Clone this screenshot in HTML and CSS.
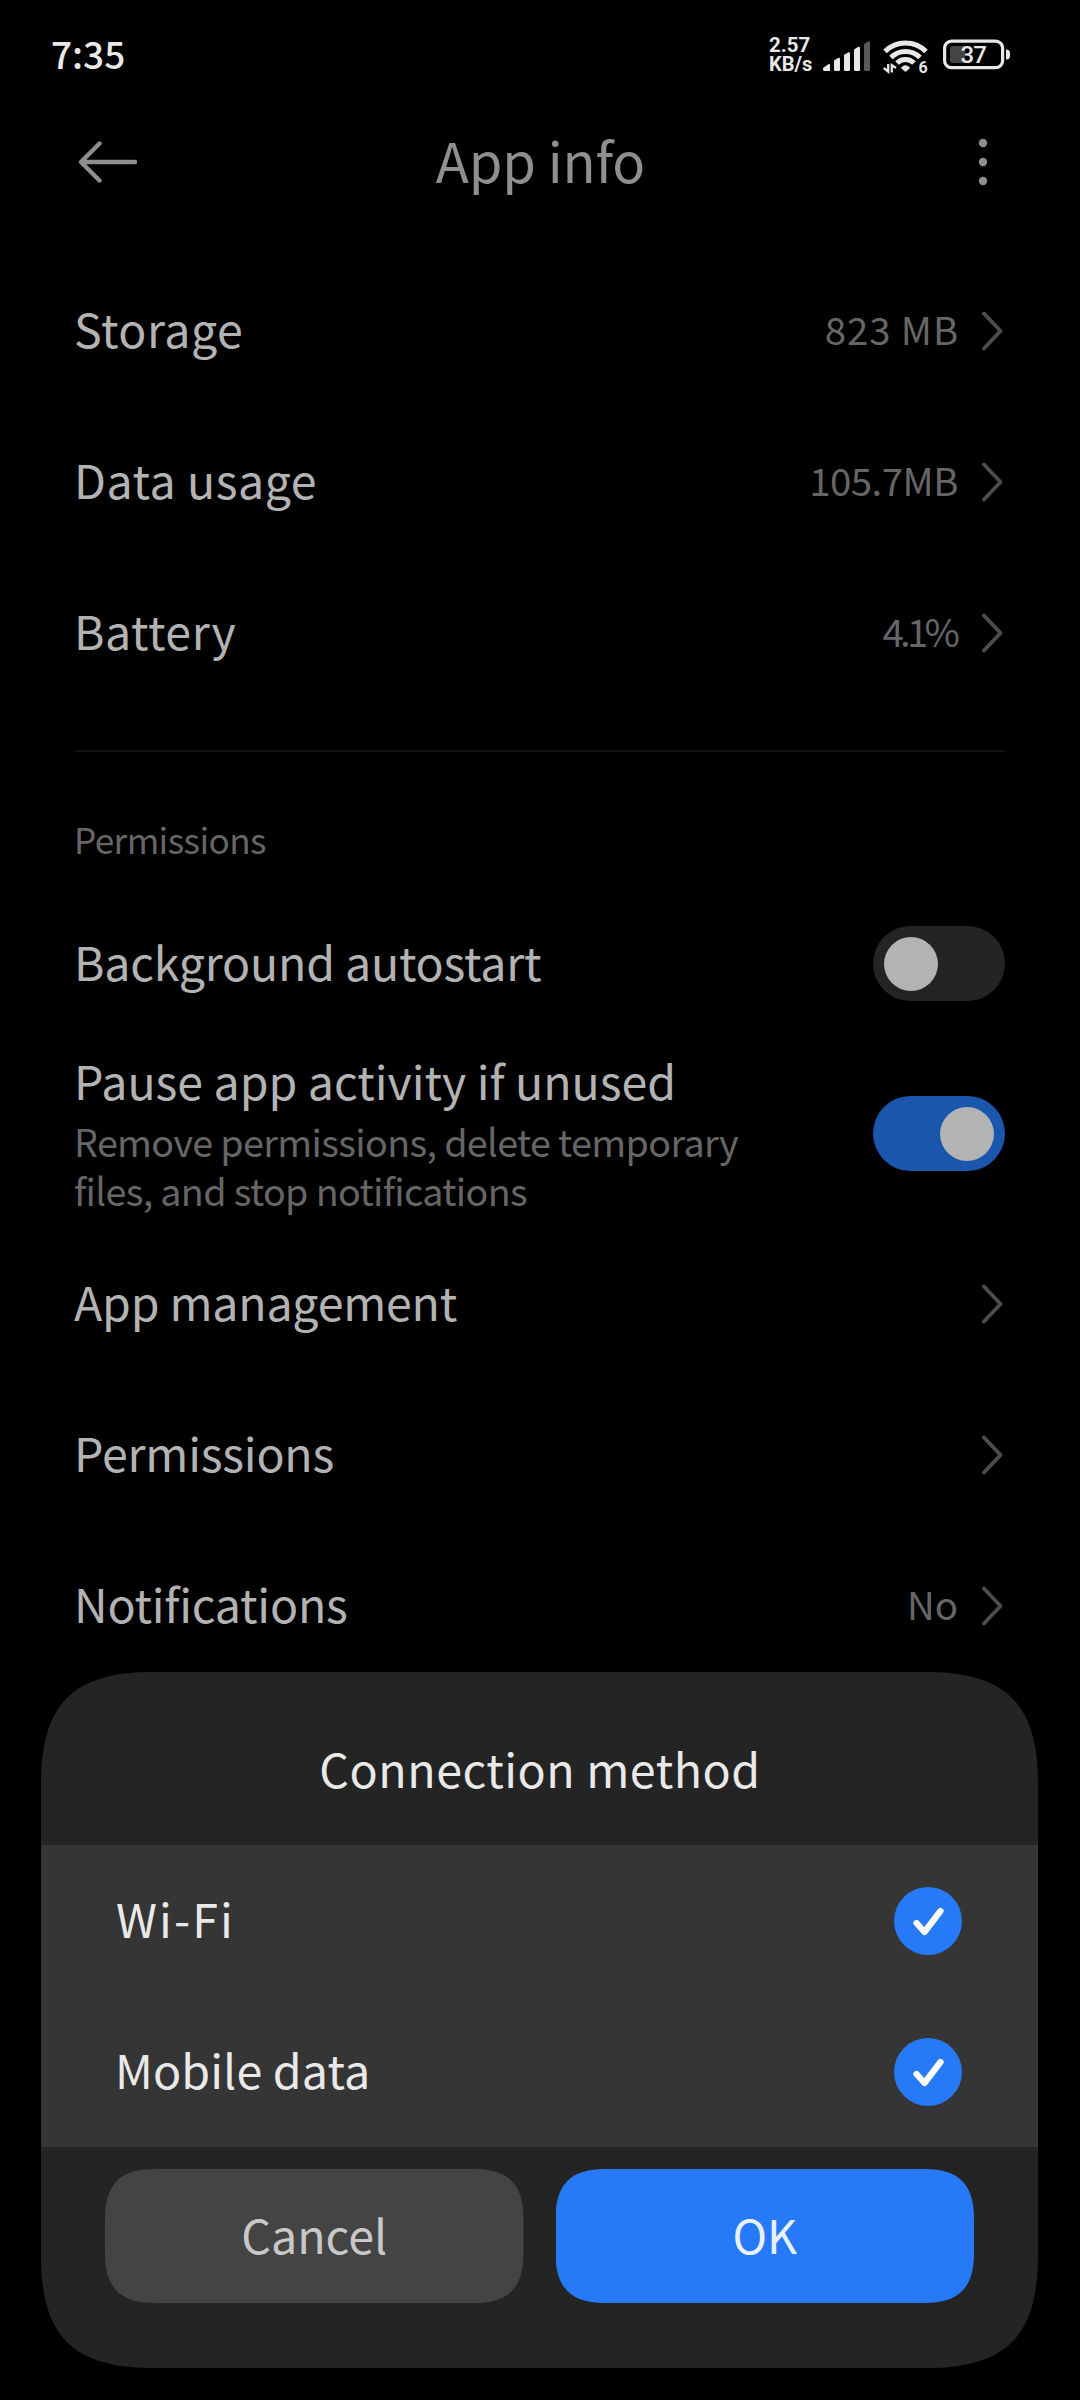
FILE: index.html
```
<!DOCTYPE html>
<html lang="en">
<head>
<meta charset="utf-8">
<title>App info</title>
<link rel="stylesheet" href="styles.css">
</head>
<body>
<div class="screen">
  <div class="status">
    <div class="clock">7:35</div>
    <div class="speed"><span class="rate">2.57</span><span>KB/s</span></div>
    <svg class="signal" width="47" height="32" viewBox="0 0 47 32">
      <g fill="#e8e8e8">
        <path d="M0 28L5 24.5Q7 23 7 25V31H1.5Q0 31 0 29.5Z"/>
        <path d="M11 20.500L15 18Q17 17 17 19V29.500Q17 31 15.500 31H12.500Q11 31 11 29.500Z"/>
        <path d="M21 15L25 12.500Q27 11.500 27 13.500V29.500Q27 31 25.500 31H22.500Q21 31 21 29.500Z"/>
        <path d="M31 9.500L35 7Q37 6 37 8V29.500Q37 31 35.500 31H32.500Q31 31 31 29.500Z"/>
      </g>
      <path fill="#595959" d="M41 4L45 1.500Q47 .5 47 2.500V29.500Q47 31 45.500 31H42.500Q41 31 41 29.500Z"/>
    </svg>
    <svg class="wifi" width="46" height="40" viewBox="0 0 46 40">
      <g fill="none" stroke="#e8e8e8" stroke-width="5">
        <path d="M2 14.500A29 29 0 0 1 43 14.500"/>
        <path d="M8 20.500A20.500 20.500 0 0 1 37 20.500"/>
        <path d="M14 26A12 12 0 0 1 31 26"/>
      </g>
      <path fill="#e8e8e8" d="M18.500 30Q22.500 26.500 26.500 30Q27 31 26.500 31.500L23.500 34.300Q22.500 35 21.500 34.300L18.500 31.500Q18 31 18.500 30Z"/>
      <path fill="none" stroke="#e8e8e8" stroke-width="2.300" d="M5.200 27V34.500L.8 31M8.800 35.500V28.200L13 31"/>
      <text class="generation" x="35.500" y="36">6</text>
    </svg>
    <svg class="battery" width="68" height="32" viewBox="0 0 68 32">
      <rect x="1.600" y="2.100" width="58" height="26.600" rx="7" fill="none" stroke="#e8e8e8" stroke-width="3.200"/>
      <path fill="#444" d="M10 7H22V24H10Q7 24 7 21V10Q7 7 10 7Z"/>
      <path fill="#e8e8e8" d="M63 10.500Q67 10.500 67 14V17Q67 20.500 63 20.500Z"/>
      <text class="charge" x="17.500" y="24">37</text>
    </svg>
  </div>

  <div class="header">
    <svg width="60" height="46" viewBox="0 0 60 46" fill="none" stroke="#8f8f8f" stroke-width="4.400" stroke-linecap="round" stroke-linejoin="round"><path d="M22.500 4.500L4 23L22.500 41.500M5 23H58"/></svg>
    <h1 class="title">App info</h1>
    <svg width="10" height="48" viewBox="0 0 10 48" fill="#8f8f8f"><circle cx="5" cy="5" r="4.200"/><circle cx="5" cy="24" r="4.200"/><circle cx="5" cy="43" r="4.200"/></svg>
  </div>

  <div class="group">
    <div class="row"><span class="label loose">Storage</span><span class="value v-storage">823 MB</span><svg class="chevron" viewBox="0 0 22 40"><path d="M3 2.500L19.500 20L3 37.500"/></svg></div>
    <div class="row"><span class="label loose">Data usage</span><span class="value v-data">105.7MB</span><svg class="chevron" viewBox="0 0 22 40"><path d="M3 2.500L19.500 20L3 37.500"/></svg></div>
    <div class="row"><span class="label loose">Battery</span><span class="value v-battery">4.1%</span><svg class="chevron" viewBox="0 0 22 40"><path d="M3 2.500L19.500 20L3 37.500"/></svg></div>
  </div>

  <div class="divider"></div>

  <div class="section">Permissions</div>
  <div class="group">
    <div class="row"><span class="label tight">Background autostart</span><span class="toggle"><span class="knob"></span></span></div>
    <div class="row tall">
      <div class="text">
        <div class="heading">Pause app activity if unused</div>
        <div class="summary">Remove permissions, delete temporary files, and stop notifications</div>
      </div>
      <span class="toggle on"><span class="knob"></span></span>
    </div>
    <div class="row"><span class="label tight">App management</span><svg class="chevron" viewBox="0 0 22 40"><path d="M3 2.500L19.500 20L3 37.500"/></svg></div>
    <div class="row"><span class="label tight">Permissions</span><svg class="chevron" viewBox="0 0 22 40"><path d="M3 2.500L19.500 20L3 37.500"/></svg></div>
    <div class="row"><span class="label tight">Notifications</span><span class="value">No</span><svg class="chevron" viewBox="0 0 22 40"><path d="M3 2.500L19.500 20L3 37.500"/></svg></div>
  </div>

  <div class="sheet">
    <h2 class="sheet-title">Connection method</h2>
    <div class="options">
      <div class="option"><span class="name wifi-name">Wi-Fi</span><svg width="68" height="68" viewBox="0 0 68 68"><circle cx="34" cy="34" r="34" fill="#277af7"/><path d="M22.500 36L30.500 45L46.500 24" fill="none" stroke="#fff" stroke-width="6.200" stroke-linecap="round" stroke-linejoin="round"/></svg></div>
      <div class="option"><span class="name">Mobile data</span><svg width="68" height="68" viewBox="0 0 68 68"><circle cx="34" cy="34" r="34" fill="#277af7"/><path d="M22.500 36L30.500 45L46.500 24" fill="none" stroke="#fff" stroke-width="6.200" stroke-linecap="round" stroke-linejoin="round"/></svg></div>
    </div>
    <div class="actions">
      <button class="btn">Cancel</button>
      <button class="btn primary">OK</button>
    </div>
  </div>
</div>
</body>
</html>
```
FILE: styles.css
```
* { box-sizing: border-box; }
body {
  margin: 0;
  background: #000;
  font-family: "Noto Sans CJK SC", "Noto Sans", sans-serif;
  font-variant-ligatures: none;
}
svg { display: block; flex: none; }
.screen {
  position: relative;
  width: 1080px;
  height: 2400px;
  overflow: hidden;
  background: #000;
}

.status {
  display: flex;
  align-items: center;
  height: 108px;
  padding: 0 69px 0 51px;
  color: #e8e8e8;
}
.clock { flex: 1; padding-bottom: 3px; font-size: 37px; font-weight: 500; line-height: 50px; }
.speed {
  display: flex;
  flex-direction: column;
  width: 44px;
  margin: 2px 10px 0 0;
  font-family: Roboto, sans-serif;
  font-size: 20px;
  font-weight: 700;
  line-height: 19px;
}
.rate { font-size: 20.5px; }
.signal { margin: 3px 13px 0 0; }
.wifi { margin: 5px 14px 0 0; }
.battery { margin-top: 2px; }
.generation { font-family: Roboto, sans-serif; font-size: 16px; font-weight: 700; fill: #e8e8e8; }
.charge { font-family: Roboto, sans-serif; font-size: 24px; font-weight: 500; letter-spacing: -1px; fill: #e8e8e8; }

.header {
  display: flex;
  align-items: center;
  justify-content: space-between;
  height: 108px;
  padding: 0 92px 0 77px;
}
.title {
  margin: 0 0 0 -34px;
  padding-bottom: 4px;
  color: #8f8f8f;
  font-size: 54.4px;
  font-weight: 400;
  line-height: 76px;
  letter-spacing: -0.2px;
}

.group { padding: 0 75px 0 74px; }
.header + .group { padding-top: 39px; }
.row { display: flex; align-items: center; height: 151px; }
.row.tall { height: 189px; }
.label, .heading { color: #b3b3b3; font-size: 46.5px; line-height: 68px; }
.label { flex: 1; padding-bottom: 5px; }
.loose { letter-spacing: 0.5px; }
.tight { letter-spacing: -0.22px; }
.value {
  margin-right: 23px;
  padding-bottom: 6px;
  color: #666;
  font-size: 38.4px;
  line-height: 56px;
}
.v-storage { margin-right: 22px; letter-spacing: 0.89px; }
.v-data { letter-spacing: -0.49px; }
.v-battery { margin-right: 25px; letter-spacing: -3.8px; }
.chevron {
  width: 22px;
  height: 40px;
  margin-right: 2px;
  fill: none;
  stroke: #4d4d4d;
  stroke-width: 3.8;
  stroke-linecap: round;
  stroke-linejoin: round;
}
.divider { height: 2px; margin: 42px 75px 0; background: #141414; }
.section {
  height: 136px;
  padding: 62px 74px 0;
  color: #666;
  font-size: 35.2px;
  line-height: 50px;
  letter-spacing: -0.61px;
}
.text { width: 700px; margin-right: auto; padding-bottom: 7px; }
.summary { margin-top: 2px; color: #666; font-size: 37.7px; line-height: 49px; letter-spacing: -0.64px; }

.toggle {
  display: flex;
  align-items: center;
  width: 132px;
  height: 75px;
  padding: 0 11px;
  border-radius: 38px;
  background: #242424;
}
.toggle.on { justify-content: flex-end; background: #1b56ad; }
.knob { width: 54px; height: 54px; border-radius: 50%; background: #b3b3b3; }

.sheet {
  position: absolute;
  left: 41px;
  top: 1672px;
  width: 997px;
  height: 696px;
  background: #242424;
  color: #e9e9e9;
  clip-path: path("M0 112C0 32 32 0 112 0H885C965 0 997 32 997 112V584C997 664 965 696 885 696H112C32 696 0 664 0 584Z");
}
.sheet-title {
  height: 173px;
  margin: 0;
  padding: 62px 0 0 1px;
  font-size: 46.6px;
  font-weight: 400;
  line-height: 68px;
  letter-spacing: 0.5px;
  text-align: center;
}
.options { background: #353535; }
.option {
  display: flex;
  align-items: center;
  justify-content: space-between;
  height: 151px;
  padding: 0 76px 0 74px;
}
.name { padding-bottom: 5px; font-size: 46.6px; line-height: 68px; letter-spacing: 0.1px; }
.wifi-name { padding-left: 1px; letter-spacing: 2.1px; }
.actions { display: flex; gap: 32px; padding: 22px 64px 0; }
.btn {
  flex: 1;
  height: 134px;
  padding: 0 0 4px;
  border: 0;
  background: #444;
  color: #c8c8c8;
  font-family: inherit;
  font-size: 46.6px;
  line-height: 68px;
  clip-path: path("M0 50C0 15 15 0 50 0H368.500C403.500 0 418.500 15 418.500 50V84C418.500 119 403.500 134 368.500 134H50C15 134 0 119 0 84Z");
}
.btn.primary { background: #277af7; color: #e9f1fe; }
```
